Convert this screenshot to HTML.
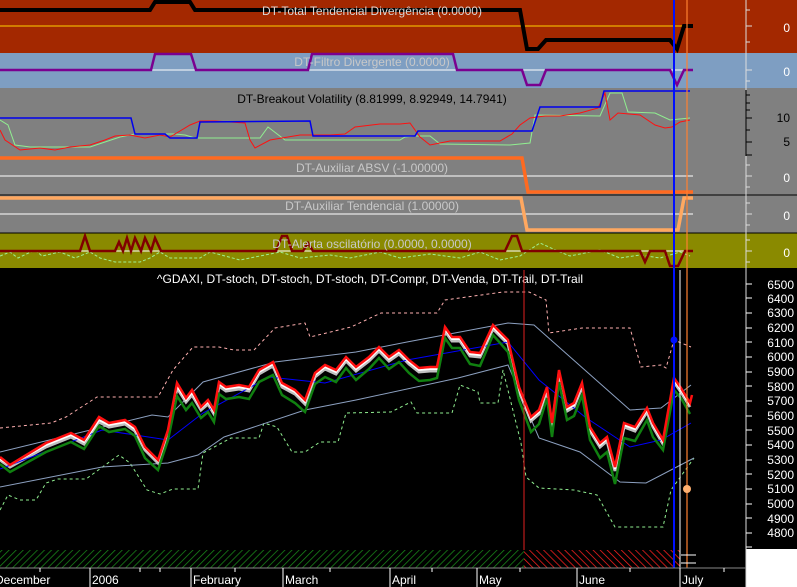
<!DOCTYPE html>
<html><head><meta charset="utf-8"><style>
html,body{margin:0;padding:0;background:#000;}
svg{display:block;font-family:"Liberation Sans",sans-serif;}
</style></head><body>
<svg width="797" height="587" viewBox="0 0 797 587" xmlns="http://www.w3.org/2000/svg">
<defs>
<pattern id="hg" width="5" height="5" patternUnits="userSpaceOnUse" patternTransform="rotate(45)"><line x1="0" y1="0" x2="0" y2="5" stroke="#1a8a1a" stroke-width="1.5"/></pattern>
<pattern id="hr" width="5" height="5" patternUnits="userSpaceOnUse" patternTransform="rotate(-45)"><line x1="0" y1="0" x2="0" y2="5" stroke="#ff2020" stroke-width="1.5"/></pattern>
</defs>
<rect x="0" y="0" width="797" height="53" fill="#a32800"/>
<rect x="0" y="53" width="797" height="35" fill="#7e9ec2"/>
<rect x="0" y="88" width="797" height="107" fill="#808080"/>
<rect x="0" y="195" width="797" height="38" fill="#808080"/>
<rect x="0" y="233" width="797" height="35" fill="#8a8a00"/>
<line x1="0" y1="195" x2="797" y2="195" stroke="#000"/>
<line x1="0" y1="233" x2="797" y2="233" stroke="#000"/>
<rect x="0" y="268" width="797" height="319" fill="#000"/>
<rect x="746" y="549" width="51" height="38" fill="#fff"/>
<line x1="746" y1="0" x2="746" y2="587" stroke="#ddd"/>
<line x1="0" y1="26" x2="693" y2="26" stroke="#ffd000"/>
<polyline fill="none" stroke="#000" stroke-width="4" points="0,10 150,10 155,2 190,2 195,10 520,10 527,49 538,49 546,40 670,40 677,49 684,26 693,26"/>
<text x="372" y="15" font-size="12" fill="#d8d8d8" text-anchor="middle">DT-Total Tendencial Divergência (0.0000)</text>
<text x="790" y="32" font-size="12" fill="#fff" text-anchor="end">0</text>
<line x1="0" y1="70" x2="693" y2="70" stroke="#fff"/>
<polyline fill="none" stroke="#7a0090" stroke-width="2.5" points="0,70 151,70 155,54 191,54 196,70 308,70 312,54 453,54 457,70 522,70 527,85 540,85 546,70 670,70 677,85 684,70 693,70"/>
<text x="372" y="66" font-size="12" fill="#c8c8c8" text-anchor="middle">DT-Filtro Divergente (0.0000)</text>
<text x="790" y="76" font-size="12" fill="#fff" text-anchor="end">0</text>
<text x="372" y="103" font-size="12" fill="#000" text-anchor="middle">DT-Breakout Volatility (8.81999, 8.92949, 14.7941)</text>
<polyline fill="none" stroke="#90ee90" stroke-width="1" points="0,120 8,125 15,145 30,147 90,147 120,137 135,134 175,134 185,135 195,138 200,138 260,138 268,127 285,140 300,140 395,140 400,140 405,137 415,136 430,136 440,144 510,145 530,143 535,115 600,116 610,93 622,93 628,112 655,113 670,120 680,119 690,118"/>
<polyline fill="none" stroke="#ff1010" stroke-width="1" points="0,130 5,140 20,150 40,148 55,150 70,147 90,145 105,140 115,136 130,135 145,138 160,135 170,137 175,134 190,125 200,121 215,121 245,123 250,140 255,148 270,140 300,135 330,135 345,134 355,127 380,124 400,124 410,123 420,137 430,145 450,141 470,141 500,141 512,134 520,125 530,118 545,116 560,116 580,113 598,108 605,93 610,120 618,113 640,115 655,125 665,128 672,127 680,122 690,120"/>
<polyline fill="none" stroke="#0000ee" stroke-width="1.5" points="0,118 131,118 135,134 165,134 170,138 197,138 200,122 310,121 313,136 415,136 418,131 532,131 540,107 600,107 604,91 690,91"/>
<text x="790" y="122" font-size="12" fill="#000" text-anchor="end">10</text>
<text x="790" y="146" font-size="12" fill="#000" text-anchor="end">5</text>
<line x1="0" y1="176" x2="693" y2="176" stroke="#fff"/>
<polyline fill="none" stroke="#ff6a20" stroke-width="3.5" points="0,158 522,158 528,192 693,192"/>
<text x="372" y="172" font-size="12" fill="#c8c8c8" text-anchor="middle">DT-Auxiliar ABSV (-1.00000)</text>
<text x="790" y="182" font-size="12" fill="#fff" text-anchor="end">0</text>
<line x1="0" y1="214" x2="693" y2="214" stroke="#fff"/>
<polyline fill="none" stroke="#ffa860" stroke-width="3.5" points="0,198 521,198 527,230 678,230 684,198 693,198"/>
<text x="372" y="210" font-size="12" fill="#c8c8c8" text-anchor="middle">DT-Auxiliar Tendencial (1.00000)</text>
<text x="790" y="220" font-size="12" fill="#fff" text-anchor="end">0</text>
<line x1="0" y1="251" x2="693" y2="251" stroke="#fff"/>
<polyline fill="none" stroke="#a0f090" stroke-width="1" stroke-dasharray="3,2" points="0,256 10,252 18,258 35,250 42,256 60,252 75,258 90,252 100,258 115,262 140,262 150,258 160,252 170,258 200,258 210,252 240,260 260,256 280,252 300,258 330,255 350,258 380,252 400,258 430,254 460,258 480,252 500,260 520,256 540,243 560,252 570,256 600,250 620,258 640,255 660,258 680,252 690,256"/>
<polyline fill="none" stroke="#800000" stroke-width="2.5" points="0,251 80,251 85,236 90,251 115,251 119,242 123,251 127,238 131,251 135,238 141,251 145,238 151,251 155,238 161,251 276,251 282,236 287,236 292,251 303,251 308,243 313,251 505,251 512,236 517,236 522,251 640,251 645,262 650,251 665,251 670,266 678,266 685,251 693,251"/>
<text x="372" y="248" font-size="12" fill="#c8c8c8" text-anchor="middle">DT-Alerta oscilatório (0.0000, 0.0000)</text>
<text x="790" y="257" font-size="12" fill="#fff" text-anchor="end">0</text>
<g stroke="#ddd">
<line x1="746" y1="10" x2="750" y2="10"/><line x1="746" y1="26" x2="752" y2="26"/><line x1="746" y1="42" x2="750" y2="42"/>
<line x1="746" y1="70" x2="752" y2="70"/><line x1="746" y1="81" x2="750" y2="81"/>
<line x1="746" y1="165" x2="750" y2="165"/><line x1="746" y1="176" x2="752" y2="176"/><line x1="746" y1="187" x2="750" y2="187"/>
<line x1="746" y1="203" x2="750" y2="203"/><line x1="746" y1="214" x2="752" y2="214"/><line x1="746" y1="225" x2="750" y2="225"/>
<line x1="746" y1="240" x2="750" y2="240"/><line x1="746" y1="251" x2="752" y2="251"/><line x1="746" y1="262" x2="750" y2="262"/>
</g>
<g stroke="#000"><line x1="746" y1="90" x2="746" y2="156"/>
<line x1="746" y1="95" x2="750" y2="95"/><line x1="746" y1="103" x2="750" y2="103"/><line x1="746" y1="110" x2="750" y2="110"/><line x1="746" y1="118" x2="752" y2="118"/><line x1="746" y1="130" x2="750" y2="130"/><line x1="746" y1="142" x2="752" y2="142"/><line x1="746" y1="155" x2="752" y2="155"/></g>
<text x="370" y="283" font-size="12" fill="#fff" text-anchor="middle">^GDAXI, DT-stoch, DT-stoch, DT-stoch, DT-Compr, DT-Venda, DT-Trail, DT-Trail</text>
<rect x="0" y="550" width="524" height="18" fill="url(#hg)"/>
<rect x="524" y="550" width="156" height="18" fill="url(#hr)"/>
<polyline fill="none" stroke="#ffb0b0" stroke-width="1" stroke-dasharray="3,3" points="0,428 51,423 66,417 97,397 158,397 173,370 193,347 219,347 234,350 254,350 275,328 305,323 310,337 351,327 381,313 437,313 445,300 503,292 529,292 546,300 549,333 582,328 630,328 641,367 661,365 666,368 674,340 691,347"/>
<polyline fill="none" stroke="#90ee90" stroke-width="1" stroke-dasharray="3,3" points="0,510 8,495 20,500 36,500 46,483 58,479 86,479 119,455 130,463 147,490 160,494 173,489 198,489 203,453 231,438 259,438 264,423 277,427 292,452 305,452 320,442 338,442 346,413 391,412 411,402 417,413 452,413 460,385 478,392 480,403 498,403 503,370 521,443 526,477 539,488 574,490 597,495 615,527 663,527 671,490 694,458"/>
<polyline fill="none" stroke="#8ca0c0" stroke-width="1" points="0,452 152,415 168,417 203,382 275,362 356,352 407,342 508,323 534,325 630,410 661,408 691,385"/>
<polyline fill="none" stroke="#8ca0c0" stroke-width="1" points="0,487 102,467 168,463 198,455 224,437 305,410 356,400 458,378 508,365 539,438 580,452 620,482 646,483 694,458"/>
<polyline fill="none" stroke="#c0c0c0" stroke-width="3" points="0,460 10,467 46,447 71,437 84,444 99,422 109,427 125,424 135,431 145,450 158,463 168,434 177,388 186,402 192,395 201,410 208,404 214,414 219,386 226,391 239,389 249,391 259,374 273,366 282,387 295,394 305,404 315,377 325,369 336,374 346,361 356,371 369,361 379,351 389,361 399,354 409,364 419,372 430,371 437,371 445,331 452,341 460,341 470,356 480,357 493,329 501,337 508,344 519,391 531,421 539,414 547,391 552,427 559,374 567,411 574,407 582,387 590,431 600,447 607,441 615,471 624,427 635,431 647,412 653,427 663,444 674,382 681,392 690,407"/>
<polyline fill="none" stroke="#0000ff" stroke-width="1" points="0,469 102,430 168,440 203,413 269,377 325,383 407,360 508,342 539,380 585,417 630,447 661,440 691,423"/>
<polyline fill="none" stroke="#fff" stroke-width="2" points="0,459 10,465 46,445 71,435 84,442 99,420 109,425 125,422 135,429 145,448 158,461 168,432 177,386 186,400 192,393 201,408 208,402 214,412 219,384 226,389 239,387 249,389 259,372 273,364 282,385 295,392 305,402 315,375 325,367 336,372 346,359 356,369 369,359 379,349 389,359 399,352 409,362 419,370 430,369 437,369 445,329 452,339 460,339 470,354 480,355 493,327 501,335 508,342 519,389 531,419 539,412 547,389 552,425 559,372 567,409 574,405 582,385 590,429 600,445 607,439 615,469 624,425 635,429 647,410 653,425 663,442 674,380 681,390 690,405"/>
<polyline fill="none" stroke="#108010" stroke-width="2.5" points="0,464 10,472 46,452 71,442 84,449 99,426 109,432 125,429 135,436 145,458 158,470 168,440 177,396 186,410 192,403 201,418 208,412 214,422 219,394 226,399 239,397 249,399 259,382 273,375 282,395 295,403 305,412 315,384 325,377 336,382 346,368 356,380 369,369 379,358 389,369 399,362 409,373 419,381 430,380 437,378 445,338 452,348 460,348 470,364 480,366 493,335 501,344 508,352 519,400 531,432 539,424 547,398 552,437 559,382 567,420 574,416 582,395 590,440 600,458 607,452 615,484 624,438 635,441 647,420 653,437 663,450 674,390 681,398 690,414"/>
<polyline fill="none" stroke="#ff1010" stroke-width="2.5" points="0,457 10,465 46,443 71,433 84,440 99,417 109,423 125,420 135,427 145,447 158,460 168,430 177,383 186,398 192,390 201,407 208,400 214,410 219,382 226,387 239,385 249,387 259,370 273,362 282,383 295,390 305,400 315,373 325,365 336,370 346,357 356,367 369,357 379,347 389,357 399,350 409,360 419,368 430,367 437,367 445,327 452,337 460,337 470,352 480,353 493,325 501,333 508,340 519,387 531,417 539,410 547,387 552,423 559,370 567,407 574,403 582,383 590,427 600,443 607,437 615,467 624,423 635,427 647,408 653,423 663,440 674,378 681,388 690,403 692,395"/>
<line x1="524" y1="270" x2="524" y2="550" stroke="#e02020" stroke-width="1"/>
<line x1="680" y1="270" x2="680" y2="568" stroke="#fff" stroke-width="1"/>
<line x1="674" y1="0" x2="674" y2="568" stroke="#0010ff" stroke-width="2"/>
<line x1="687" y1="0" x2="687" y2="568" stroke="#ff8030" stroke-width="1.2"/>
<circle cx="674" cy="340" r="3.5" fill="#0010ff"/>
<circle cx="687" cy="489" r="4" fill="#ffb070"/>
<line x1="681" y1="555" x2="696" y2="555" stroke="#fff"/>
<line x1="681" y1="563" x2="696" y2="563" stroke="#fff"/>
<g font-size="12" fill="#fff" text-anchor="end">
<text x="794" y="289">6500</text><text x="794" y="303">6400</text><text x="794" y="317">6300</text><text x="794" y="332">6200</text><text x="794" y="347">6100</text><text x="794" y="361">6000</text><text x="794" y="376">5900</text><text x="794" y="391">5800</text><text x="794" y="405">5700</text><text x="794" y="420">5600</text><text x="794" y="435">5500</text><text x="794" y="449">5400</text><text x="794" y="464">5300</text><text x="794" y="479">5200</text><text x="794" y="493">5100</text><text x="794" y="508">5000</text><text x="794" y="523">4900</text><text x="794" y="537">4800</text>
</g>
<g stroke="#fff"><line x1="746" y1="284" x2="752" y2="284"/><line x1="746" y1="298" x2="752" y2="298"/><line x1="746" y1="313" x2="752" y2="313"/><line x1="746" y1="328" x2="752" y2="328"/><line x1="746" y1="342" x2="752" y2="342"/><line x1="746" y1="357" x2="752" y2="357"/><line x1="746" y1="372" x2="752" y2="372"/><line x1="746" y1="386" x2="752" y2="386"/><line x1="746" y1="401" x2="752" y2="401"/><line x1="746" y1="416" x2="752" y2="416"/><line x1="746" y1="430" x2="752" y2="430"/><line x1="746" y1="445" x2="752" y2="445"/><line x1="746" y1="460" x2="752" y2="460"/><line x1="746" y1="474" x2="752" y2="474"/><line x1="746" y1="489" x2="752" y2="489"/><line x1="746" y1="504" x2="752" y2="504"/><line x1="746" y1="518" x2="752" y2="518"/><line x1="746" y1="533" x2="752" y2="533"/><line x1="746" y1="547" x2="752" y2="547"/></g>
<line x1="0" y1="568" x2="746" y2="568" stroke="#888"/>
<g stroke="#fff"><line x1="90" y1="568" x2="90" y2="587"/><line x1="191" y1="568" x2="191" y2="587"/><line x1="283" y1="568" x2="283" y2="587"/><line x1="390" y1="568" x2="390" y2="587"/><line x1="477" y1="568" x2="477" y2="587"/><line x1="577" y1="568" x2="577" y2="587"/><line x1="680" y1="568" x2="680" y2="587"/>
<line x1="40" y1="568" x2="40" y2="572"/><line x1="140" y1="568" x2="140" y2="572"/><line x1="160" y1="568" x2="160" y2="572"/><line x1="235" y1="568" x2="235" y2="572"/><line x1="330" y1="568" x2="330" y2="572"/><line x1="432" y1="568" x2="432" y2="572"/><line x1="520" y1="568" x2="520" y2="572"/><line x1="630" y1="568" x2="630" y2="572"/><line x1="724" y1="568" x2="724" y2="572"/></g>
<g font-size="12" fill="#fff">
<text x="-5" y="584">December</text><text x="92" y="584">2006</text><text x="193" y="584">February</text><text x="285" y="584">March</text><text x="392" y="584">April</text><text x="479" y="584">May</text><text x="579" y="584">June</text><text x="682" y="584">July</text>
</g>
</svg>
</body></html>
